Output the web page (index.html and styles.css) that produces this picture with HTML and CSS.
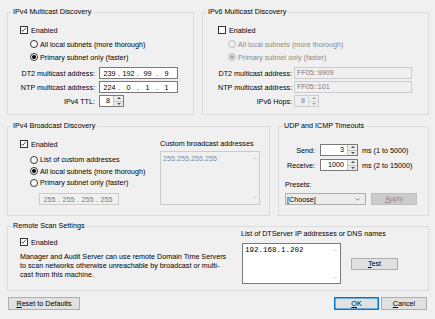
FILE: index.html
```html
<!DOCTYPE html>
<html>
<head>
<meta charset="utf-8">
<title>Discovery Settings</title>
<link rel="stylesheet" href="styles.css">
</head>
<body>
<div class="dialog">
  <div class="row row1">
    <fieldset class="group g-v4">
      <legend>IPv4 Multicast Discovery</legend>
      <div class="gbody b-v4">
        <div class="check-row"><span class="cb"><svg viewBox="0 0 8 8" width="6" height="6"><polyline points="0.6,3.9 2.4,5.8 6.6,0.9" fill="none" stroke="#000" stroke-width="0.9"/></svg></span>Enabled</div>
        <div class="radios">
          <div class="radio-row"><span class="rb"></span>All local subnets (more thorough)</div>
          <div class="radio-row"><span class="rb on"></span>Primary subnet only (faster)</div>
        </div>
        <div class="addr-grid grid-v4">
          <span class="lbl">DT2 multicast address:</span>
          <div class="ipbox"><span class="oct">239</span><span class="dot">.</span><span class="oct">192</span><span class="dot">.</span><span class="oct">99</span><span class="dot">.</span><span class="oct">9</span></div>
          <span class="lbl">NTP multicast address:</span>
          <div class="ipbox"><span class="oct">224</span><span class="dot">.</span><span class="oct">0</span><span class="dot">.</span><span class="oct">1</span><span class="dot">.</span><span class="oct">1</span></div>
          <span class="lbl">IPv4 TTL:</span>
          <div class="spin w25"><span class="spin-val">8</span><span class="spin-btns"><span class="sb"><i class="tri up"></i></span><span class="sb"><i class="tri down"></i></span></span></div>
        </div>
      </div>
    </fieldset>
    <fieldset class="group g-v6">
      <legend>IPv6 Multicast Discovery</legend>
      <div class="gbody b-v6">
        <div class="check-row"><span class="cb"></span>Enabled</div>
        <div class="radios dis">
          <div class="radio-row"><span class="rb"></span>All local subnets (more thorough)</div>
          <div class="radio-row"><span class="rb on"></span>Primary subnet only (faster)</div>
        </div>
        <div class="addr-grid grid-v6">
          <span class="lbl">DT2 multicast address:</span>
          <div class="tbox dis">FF05::9909</div>
          <span class="lbl">NTP multicast address:</span>
          <div class="tbox dis">FF05::101</div>
          <span class="lbl">IPv6 Hops:</span>
          <div class="spin w25 dis"><span class="spin-val">8</span><span class="spin-btns"><span class="sb"><i class="tri up"></i></span><span class="sb"><i class="tri down"></i></span></span></div>
        </div>
      </div>
    </fieldset>
  </div>

  <div class="row row2">
    <fieldset class="group g-bc">
      <legend>IPv4 Broadcast Discovery</legend>
      <div class="gbody b-bc">
        <div class="bc-left">
          <div class="check-row"><span class="cb"><svg viewBox="0 0 8 8" width="6" height="6"><polyline points="0.6,3.9 2.4,5.8 6.6,0.9" fill="none" stroke="#000" stroke-width="0.9"/></svg></span>Enabled</div>
          <div class="radios bc-radios">
            <div class="radio-row"><span class="rb"></span>List of custom addresses</div>
            <div class="radio-row"><span class="rb on"></span>All local subnets (more thorough)</div>
            <div class="radio-row"><span class="rb"></span>Primary subnet only (faster)</div>
          </div>
          <div class="ipbox dis bc-ip"><span class="oct">255</span><span class="dot">.</span><span class="oct">255</span><span class="dot">.</span><span class="oct">255</span><span class="dot">.</span><span class="oct">255</span></div>
        </div>
        <div class="bc-right">
          <div class="cap">Custom broadcast addresses</div>
          <div class="listbox dis">
            <div class="list-text">255.255.255.255</div>
            <div class="vscroll">
              <svg viewBox="0 0 6 4" width="5" height="3"><polyline points="0.5,3.5 3,1 5.5,3.5" fill="none" stroke="#b4b4b4" stroke-width="0.8"/></svg>
              <svg viewBox="0 0 6 4" width="5" height="3"><polyline points="0.5,0.5 3,3 5.5,0.5" fill="none" stroke="#b4b4b4" stroke-width="0.8"/></svg>
            </div>
          </div>
        </div>
      </div>
    </fieldset>
    <fieldset class="group g-udp">
      <legend>UDP and ICMP Timeouts</legend>
      <div class="gbody b-udp">
        <div class="to-grid">
          <span class="lbl">Send:</span>
          <div class="spin w38"><span class="spin-val">3</span><span class="spin-btns"><span class="sb"><i class="tri up"></i></span><span class="sb"><i class="tri down"></i></span></span></div>
          <span>ms (1 to 5000)</span>
          <span class="lbl">Receive:</span>
          <div class="spin w38"><span class="spin-val">1000</span><span class="spin-btns"><span class="sb"><i class="tri up"></i></span><span class="sb"><i class="tri down"></i></span></span></div>
          <span>ms (2 to 15000)</span>
        </div>
        <div class="presets-lbl">Presets:</div>
        <div class="presets-row">
          <div class="combo"><span>[Choose]</span><svg viewBox="0 0 6 4" width="5" height="3"><polyline points="0.5,0.5 3,3 5.5,0.5" fill="none" stroke="#444" stroke-width="0.8"/></svg></div>
          <div class="btn btn-dis"><u>A</u>pply</div>
        </div>
      </div>
    </fieldset>
  </div>

  <div class="row row3">
    <fieldset class="group g-rs">
      <legend>Remote Scan Settings</legend>
      <div class="gbody b-rs">
        <div class="rs-left">
          <div class="check-row"><span class="cb"><svg viewBox="0 0 8 8" width="6" height="6"><polyline points="0.6,3.9 2.4,5.8 6.6,0.9" fill="none" stroke="#000" stroke-width="0.9"/></svg></span>Enabled</div>
          <p class="desc">Manager and Audit Server can use remote Domain Time Servers<br>to scan networks otherwise unreachable by broadcast or multi-<br>cast from this machine.</p>
        </div>
        <div class="rs-right">
          <div class="cap">List of DTServer IP addresses or DNS names</div>
          <div class="rs-line">
            <div class="textarea">
              <div class="mono">192.168.1.202</div>
              <div class="vscroll">
                <svg viewBox="0 0 6 4" width="5" height="3"><polyline points="0.5,3.5 3,1 5.5,3.5" fill="none" stroke="#b4b4b4" stroke-width="0.8"/></svg>
                <svg viewBox="0 0 6 4" width="5" height="3"><polyline points="0.5,0.5 3,3 5.5,0.5" fill="none" stroke="#b4b4b4" stroke-width="0.8"/></svg>
              </div>
            </div>
            <div class="btn btn-test"><u>T</u>est</div>
          </div>
        </div>
      </div>
    </fieldset>
  </div>

  <div class="footer">
    <div class="btn btn-reset"><u>R</u>eset to Defaults</div>
    <div class="footer-right">
      <div class="btn btn-ok"><u>O</u>K</div>
      <div class="btn btn-cancel"><u>C</u>ancel</div>
    </div>
  </div>
</div>
</body>
</html>
```

FILE: styles.css
```css
* { box-sizing: border-box; }
html, body { margin: 0; padding: 0; }
body {
  background: #f0f0f0;
  font-family: "Liberation Sans", Arial, sans-serif;
  font-size: 7.2px;
  color: #000;
  width: 435px;
  height: 319px;
  overflow: hidden;
}
.dialog { padding: 7px 6px 0 7px; }
.row { display: flex; gap: 8px; }
.row2 { margin-top: 6px; }
.row3 { margin-top: 5px; }

.group {
  margin: 0;
  padding: 0;
  border: 1px solid #dcdcdc;
  min-width: 0;
}
.group legend {
  padding: 0 2px;
  margin-left: 3px;
  line-height: 10px;
}
.g-v4 { width: 187px; }
.g-v6 { flex: 1; }
.g-bc { width: 263px; }
.g-udp { flex: 1; }
.g-rs { flex: 1; }

.b-v4 { padding: 8px 0 7px 12px; }
.b-v6 { padding: 8px 0 7px 15px; }
.b-bc { padding: 8px 9px 10px 12px; display: flex; }
.b-udp { padding: 8px 0 0 6px; }
.b-rs { padding: 0 0 6px 12px; display: flex; }

.check-row { display: flex; align-items: center; height: 10px; }
.cb {
  width: 8px; height: 8px;
  border: 1px solid #333;
  background: #fff;
  margin-right: 3px;
  display: flex; align-items: center; justify-content: center;
}
.radios { margin: 4px 0 0 10px; display: flex; flex-direction: column; gap: 3px; }
.radio-row { display: flex; align-items: center; height: 10px; }
.rb {
  width: 8px; height: 8px;
  border: 1px solid #333;
  border-radius: 50%;
  background: #fff;
  margin-right: 2px;
  display: flex; align-items: center; justify-content: center;
}
.rb.on::after {
  content: "";
  width: 4px; height: 4px;
  border-radius: 50%;
  background: #000;
}
.radios.dis { color: #8a8a8a; }
.radios.dis .rb { border-color: #bcbcbc; background: #f0f0f0; }
.radios.dis .rb.on::after { background: #a8a8a8; }

.addr-grid {
  display: grid;
  grid-auto-rows: 12px;
  row-gap: 2px;
  align-items: center;
  margin-top: 5px;
}
.grid-v4 { grid-template-columns: 75px 79px; column-gap: 4px; }
.grid-v6 { grid-template-columns: 74px 118px; column-gap: 2px; }
.lbl { text-align: right; white-space: nowrap; }

.ipbox {
  display: flex;
  align-items: center;
  height: 12px;
  border: 1px solid #7a7a7a;
  background: #fff;
  padding-left: 2.5px;
}
.oct { width: 14px; text-align: center; }
.dot { width: 5px; text-align: center; }
.ipbox.dis { border-color: #cccccc; background: #f0f0f0; color: #7a7a7a; }

.tbox {
  height: 12px;
  border: 1px solid #7a7a7a;
  background: #fff;
  padding-left: 2px;
  line-height: 10px;
}
.tbox.dis { border-color: #cccccc; background: #f0f0f0; color: #7a7a7a; }

.spin {
  display: flex;
  height: 12px;
  border: 1px solid #7a7a7a;
  background: #fff;
  justify-self: start;
}
.w25 { width: 25px; }
.w38 { width: 38px; }
.spin-val { flex: 1; text-align: right; padding-right: 3px; line-height: 10px; }
.spin-btns {
  width: 10px;
  display: flex;
  flex-direction: column;
  border-left: 1px solid #c4c4c4;
}
.sb {
  flex: 1;
  display: flex; align-items: center; justify-content: center;
  background: #ececec;
}
.sb + .sb { border-top: 1px solid #c4c4c4; }
.tri { width: 0; height: 0; border-left: 2px solid transparent; border-right: 2px solid transparent; }
.tri.up { border-bottom: 2px solid #505050; }
.tri.down { border-top: 2px solid #505050; }
.spin.dis { border-color: #cccccc; background: #f0f0f0; color: #7a7a7a; }
.spin.dis .sb { background: #f0f0f0; }
.spin.dis .spin-btns, .spin.dis .sb + .sb { border-color: #d6d6d6; }
.spin.dis .tri.up { border-bottom-color: #a0a0a0; }
.spin.dis .tri.down { border-top-color: #a0a0a0; }

.bc-left { flex: 1; }
.bc-radios { margin-top: 5px; gap: 0; }
.bc-radios .radio-row { height: 11.5px; }
.bc-ip { width: 80px; margin: 4.5px 0 0 19px; }
.bc-right { width: 100px; }
.cap { height: 10px; line-height: 10px; white-space: nowrap; }
.listbox {
  height: 54px;
  margin-top: 2px;
  border: 1px solid #cccccc;
  background: #f0f0f0;
  display: flex;
}
.list-text { flex: 1; color: #8a8a8a; padding: 3px 0 0 2px; line-height: 8px; }
.vscroll {
  width: 10px;
  display: flex;
  flex-direction: column;
  justify-content: space-between;
  align-items: center;
  padding: 5px 0 5px;
}

.to-grid {
  display: grid;
  grid-template-columns: 30px 38px auto;
  column-gap: 5px;
  grid-auto-rows: 12px;
  row-gap: 3px;
  align-items: center;
  margin-top: 5px;
}
.to-grid > span:nth-child(3n) { margin-left: -1px; }
.presets-lbl { margin-top: 9px; height: 10px; line-height: 10px; }
.presets-row { display: flex; gap: 5px; margin-top: 3px; align-items: center; }
.combo {
  width: 81px; height: 12px;
  border: 1px solid #adadad;
  background: #ececec;
  display: flex; align-items: center; justify-content: space-between;
  padding: 0 5px 0 1px;
}

.btn {
  height: 13px;
  border: 1px solid #adadad;
  background: #e1e1e1;
  text-align: center;
  line-height: 11px;
  white-space: nowrap;
}
.btn-dis { width: 46px; height: 12px; line-height: 10px; background: #cccccc; border-color: #bfbfbf; color: #8e8e8e; }

.rs-left { width: 221px; padding-top: 6px; }
.desc { margin: 5px 0 0; line-height: normal; }
.rs-right { margin-top: -2px; }
.rs-line { display: flex; align-items: center; gap: 10px; margin-top: 4px; margin-left: 1px; }
.textarea {
  width: 99px; height: 41px;
  border: 1px solid #7a7a7a;
  background: #fff;
  display: flex;
}
.mono { flex: 1; font-family: "Liberation Mono", "Courier New", monospace; font-size: 7.5px; padding: 2px 0 0 2px; line-height: 9px; }
.textarea .vscroll { padding: 5px 0 4px; }
.btn-test { width: 47px; height: 12px; line-height: 10px; }

.footer { display: flex; justify-content: space-between; margin-top: 6px; }
.btn-reset { width: 72px; margin-left: 1px; }
.footer-right { display: flex; gap: 2px; margin-right: 2px; }
.btn-ok { width: 45px; border-color: #0078d7; box-shadow: inset 0 0 0 0.5px #0078d7; }
.btn-cancel { width: 46px; }
```
